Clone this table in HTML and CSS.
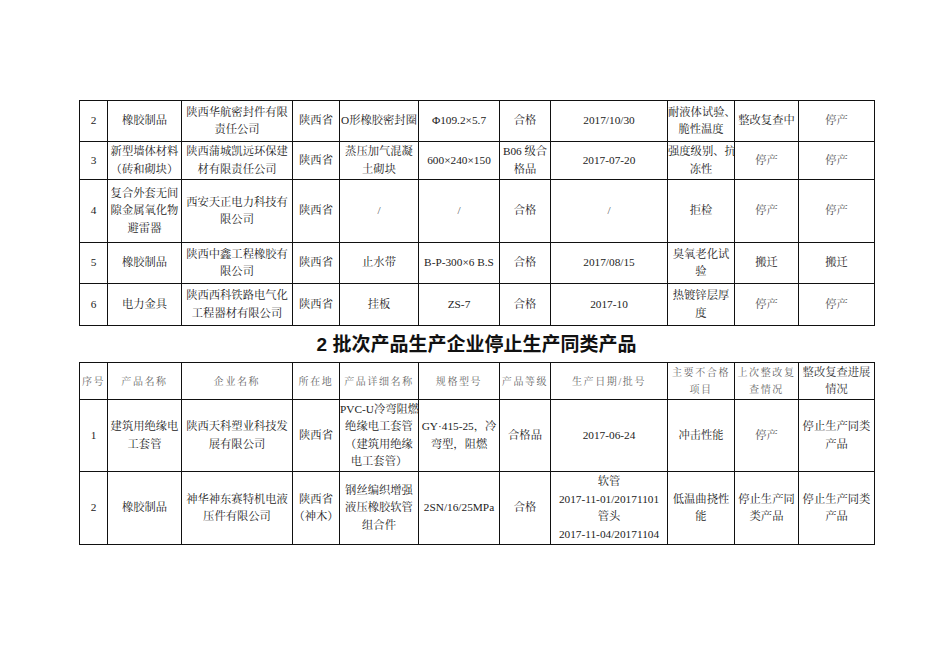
FILE: index.html
```html
<!DOCTYPE html>
<html lang="zh">
<head>
<meta charset="utf-8">
<link rel="stylesheet" href="styles.css">
</head>
<body>
<div class="page">
  <table class="grid t1">
    <colgroup>
      <col class="c1"><col class="c2"><col class="c3"><col class="c4"><col class="c5"><col class="c6"><col class="c7"><col class="c8"><col class="c9"><col class="c10"><col class="c11">
    </colgroup>
    <tr class="r41">
      <td>2</td><td>橡胶制品</td><td>陕西华航密封件有限<br>责任公司</td><td>陕西省</td><td class="clip">O形橡胶密封圈</td><td>Φ109.2×5.7</td><td>合格</td><td>2017/10/30</td><td>耐液体试验、<br>脆性温度</td><td>整改复查中</td><td class="lt">停产</td>
    </tr>
    <tr class="r38">
      <td>3</td><td>新型墙体材料<br>（砖和砌块）</td><td>陕西蒲城凯远环保建<br>材有限责任公司</td><td>陕西省</td><td>蒸压加气混凝<br>土砌块</td><td class="clip">600×240×150</td><td>B06 级合<br>格品</td><td>2017-07-20</td><td>强度级别、抗<br>冻性</td><td class="lt">停产</td><td class="lt">停产</td>
    </tr>
    <tr class="r63">
      <td>4</td><td>复合外套无间<br>隙金属氧化物<br>避雷器</td><td>西安天正电力科技有<br>限公司</td><td>陕西省</td><td class="lt">/</td><td class="lt">/</td><td>合格</td><td class="lt">/</td><td>拒检</td><td class="lt">停产</td><td class="lt">停产</td>
    </tr>
    <tr class="r41">
      <td>5</td><td>橡胶制品</td><td>陕西中鑫工程橡胶有<br>限公司</td><td>陕西省</td><td>止水带</td><td class="clip">B-P-300×6 B.S</td><td>合格</td><td>2017/08/15</td><td>臭氧老化试<br>验</td><td>搬迁</td><td>搬迁</td>
    </tr>
    <tr class="r42">
      <td>6</td><td>电力金具</td><td>陕西西科铁路电气化<br>工程器材有限公司</td><td>陕西省</td><td>挂板</td><td>ZS-7</td><td>合格</td><td>2017-10</td><td>热镀锌层厚<br>度</td><td class="lt">停产</td><td class="lt">停产</td>
    </tr>
  </table>

  <h2 class="title">2 批次产品生产企业停止生产同类产品</h2>

  <table class="grid t2">
    <colgroup>
      <col class="c1"><col class="c2"><col class="c3"><col class="c4"><col class="c5"><col class="c6"><col class="c7"><col class="c8"><col class="c9"><col class="c10"><col class="c11">
    </colgroup>
    <tr class="head">
      <td>序号</td><td>产品名称</td><td>企业名称</td><td>所在地</td><td>产品详细名称</td><td>规格型号</td><td>产品等级</td><td>生产日期/批号</td><td>主要不合格<br>项目</td><td>上次整改复<br>查情况</td><td class="dark">整改复查进展<br>情况</td>
    </tr>
    <tr class="r72">
      <td>1</td><td>建筑用绝缘电<br>工套管</td><td>陕西天科塑业科技发<br>展有限公司</td><td>陕西省</td><td>PVC-U冷弯阻燃<br>绝缘电工套管<br>（建筑用绝缘<br>电工套管）</td><td class="clip">GY·415-25，冷<br>弯型，阻燃</td><td>合格品</td><td>2017-06-24</td><td>冲击性能</td><td class="lt">停产</td><td>停止生产同类<br>产品</td>
    </tr>
    <tr class="r73">
      <td>2</td><td>橡胶制品</td><td>神华神东赛特机电液<br>压件有限公司</td><td>陕西省<br>（神木）</td><td>钢丝编织增强<br>液压橡胶软管<br>组合件</td><td>2SN/16/25MPa</td><td>合格</td><td class="clip">软管<br>2017-11-01/20171101<br>管头<br>2017-11-04/20171104</td><td>低温曲挠性<br>能</td><td>停止生产同<br>类产品</td><td>停止生产同类<br>产品</td>
    </tr>
  </table>
</div>
</body>
</html>
```

FILE: styles.css
```css
html, body {
  margin: 0;
  padding: 0;
  background: #ffffff;
}

body {
  font-family: "Liberation Serif", "Noto Serif CJK SC", "Noto Sans CJK SC", serif;
  color: #222222;
}

.page {
  width: 936px;
  height: 662px;
  box-sizing: border-box;
  padding-top: 100px;
  padding-left: 79px;
}

.grid {
  border-collapse: collapse;
  table-layout: fixed;
  width: 795px;
}

.grid td {
  border: 1px solid #111111;
  padding: 0;
  text-align: center;
  vertical-align: middle;
  font-size: 11.3px;
  line-height: 17.5px;
  white-space: nowrap;
  overflow: hidden;
}

.c1 { width: 28px; }
.c2 { width: 74px; }
.c3 { width: 111px; }
.c4 { width: 47px; }
.c5 { width: 79px; }
.c6 { width: 81px; }
.c7 { width: 51px; }
.c8 { width: 117px; }
.c9 { width: 67px; }
.c10 { width: 64px; }
.c11 { width: 76px; }

.grid td.clip {
  text-overflow: clip;
}

.grid td.lt {
  color: #555555;
}

.r41 { height: 41px; }
.r38 { height: 38px; }
.r63 { height: 63px; }
.r42 { height: 42px; }
.r72 { height: 72px; }
.r73 { height: 73px; }

.head { height: 37px; }

.head td {
  font-size: 10px;
  letter-spacing: 1.6px;
  color: #666666;
  line-height: 17px;
}

.head td.dark {
  font-size: 11.3px;
  letter-spacing: 0;
  color: #333333;
}

.title {
  margin: 0;
  height: 36px;
  line-height: 38px;
  text-align: center;
  width: 795px;
  font-family: "Liberation Sans", "Noto Sans CJK SC", sans-serif;
  font-size: 19px;
  font-weight: bold;
  color: #111111;
}
```
